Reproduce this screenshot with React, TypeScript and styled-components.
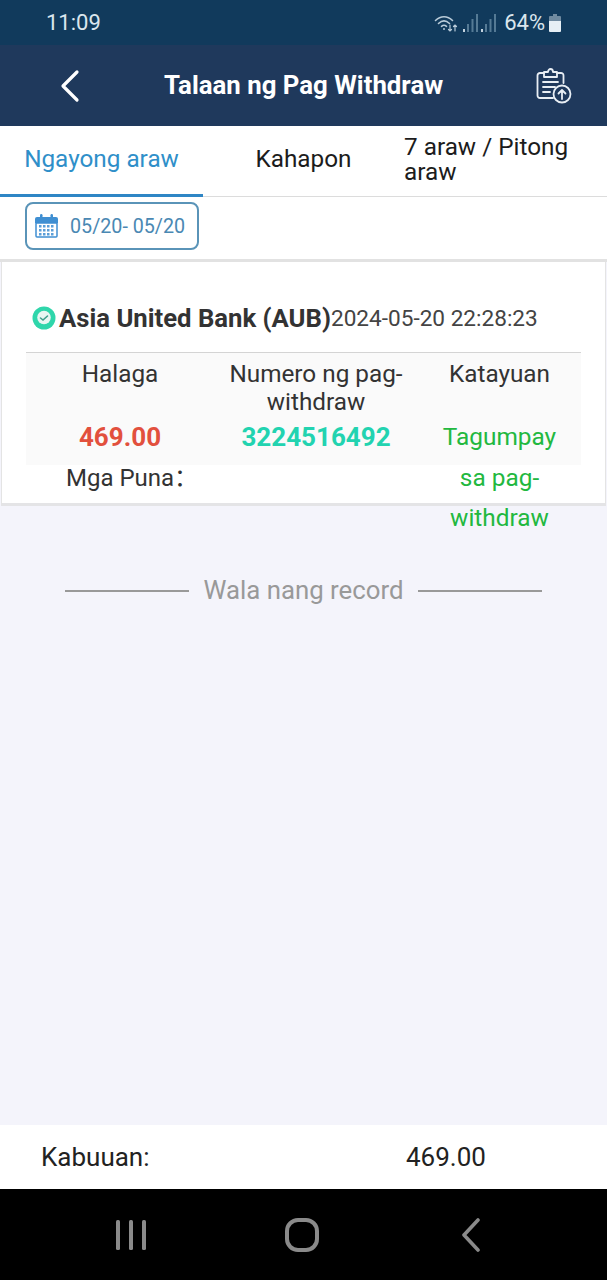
import styled, { createGlobalStyle } from 'styled-components';

const GlobalStyle = createGlobalStyle`
  html, body {
    margin: 0;
    padding: 0;
  }
  * {
    box-sizing: border-box;
  }
  body {
    font-family: Roboto, "Liberation Sans", sans-serif;
    background: #000;
  }
`;

const App = () => {
  return (
    <Page>
      <GlobalStyle />
      <StatusBar>
        <Clock>11:09</Clock>
        <StatusIcons>
          <svg width="26" height="20" viewBox="0 0 26 20" fill="none" stroke="#b9cbd9" strokeLinecap="round">
            <path d="M1.5 7.5C6.5 2.5 13.5 2.5 18.5 7.5" strokeWidth="1.6" />
            <path d="M4.5 10.5C8 7.2 12 7.2 15.5 10.5" strokeWidth="1.6" />
            <path d="M7.5 13.3C9 12 11 12 12.5 13.3" strokeWidth="1.6" />
            <circle cx="10" cy="16" r="1" fill="#b9cbd9" stroke="none" />
            <path d="M16 12v6M14.5 16.5l1.5 1.5 1.5-1.5M21 18v-6M19.5 13.5l1.5-1.5 1.5 1.5" strokeWidth="1.2" />
          </svg>
          <SignalBars />
          <SignalBars />
          <BatteryText>64%</BatteryText>
          <svg width="12" height="18" viewBox="0 0 12 18">
            <path d="M4 0h4v2h3a1 1 0 0 1 1 1v4H0V3a1 1 0 0 1 1-1h3z" fill="#6f8aa0" />
            <path d="M0 7h12v10a1 1 0 0 1-1 1H1a1 1 0 0 1-1-1z" fill="#e6eff5" />
          </svg>
        </StatusIcons>
      </StatusBar>

      <Header>
        <BackIcon width="22" height="34" viewBox="0 0 22 34" fill="none" stroke="#fff" strokeWidth="3.2" strokeLinecap="round" strokeLinejoin="round">
          <path d="M18 3L4 17l14 14" />
        </BackIcon>
        <Title>Talaan ng Pag Withdraw</Title>
        <ClipboardIcon width="38" height="38" viewBox="0 0 38 38" fill="none" stroke="#e8eef4" strokeWidth="1.8" strokeLinecap="round" strokeLinejoin="round">
          <path d="M9 6H5a2.5 2.5 0 0 0-2.500 2.500v20A2.500 2.500 0 0 0 5 31h13" />
          <path d="M22 6h4a2.500 2.500 0 0 1 2.500 2.500V16" />
          <path d="M9 5h4c0-4 5-4 5 0h4v5H9z" />
          <path d="M8 15h15M8 20h12M8 25h7" />
          <circle cx="27" cy="27" r="8.500" fill="#1f395c" />
          <path d="M27 32v-9M23.500 26.500L27 23l3.500 3.500" />
        </ClipboardIcon>
      </Header>

      <Tabs>
        <Tab $active>Ngayong araw</Tab>
        <Tab>Kahapon</Tab>
        <Tab>7 araw / Pitong araw</Tab>
      </Tabs>

      <DateRow>
        <DateButton>
          <svg width="23" height="24" viewBox="0 0 23 24">
            <path d="M0 5a2 2 0 0 1 2-2h19a2 2 0 0 1 2 2v4H0z" fill="#3f8fd2" />
            <rect x="5" y="0" width="2.500" height="6" rx="1.200" fill="#3f8fd2" />
            <rect x="15.500" y="0" width="2.500" height="6" rx="1.200" fill="#3f8fd2" />
            <path d="M1 9h21v13a1 1 0 0 1-1 1H2a1 1 0 0 1-1-1z" fill="#fff" stroke="#3f8fd2" strokeWidth="1.500" />
            <path
              d="M4 11h2.500v2.500H4zM8 11h2.500v2.500H8zM12 11h2.500v2.500H12zM16 11h2.500v2.500H16zM4 15h2.500v2.500H4zM8 15h2.500v2.500H8zM12 15h2.500v2.500H12zM16 15h2.500v2.500H16zM4 19h2.500v2.500H4zM8 19h2.500v2.500H8zM12 19h2.500v2.500H12zM16 19h2.500v2.500H16z"
              fill="#5a9ed8"
            />
          </svg>
          <DateText>05/20- 05/20</DateText>
        </DateButton>
      </DateRow>

      <Content>
        <Card>
          <CardHead>
            <svg width="24" height="24" viewBox="0 0 24 24">
              <circle cx="12" cy="12" r="11.500" fill="#2fd6ab" />
              <circle cx="12" cy="11.500" r="6.800" fill="#e9f6f2" />
              <path d="M8.500 12l2.500 2 4.500-4" fill="none" stroke="#3f9f8c" strokeWidth="1.600" strokeLinecap="round" />
            </svg>
            <BankName>Asia United Bank (AUB)</BankName>
            <Timestamp>2024-05-20 22:28:23</Timestamp>
          </CardHead>
          <Table>
            <TableRow $header>
              <HeadCell>Halaga</HeadCell>
              <HeadCell>Numero ng pag-withdraw</HeadCell>
              <HeadCell>Katayuan</HeadCell>
            </TableRow>
            <TableRow>
              <ValueCell $color="#e2503d">469.00</ValueCell>
              <ValueCell $color="#22d3b0">3224516492</ValueCell>
              <StatusCell>Tagumpay sa pag-withdraw</StatusCell>
            </TableRow>
          </Table>
          <Remarks>Mga Puna：</Remarks>
        </Card>
        <NoMore>
          <NoMoreLine />
          <span>Wala nang record</span>
          <NoMoreLine />
        </NoMore>
      </Content>

      <Footer>
        <FooterLabel>Kabuuan:</FooterLabel>
        <span>469.00</span>
      </Footer>

      <NavBar>
        <svg width="32" height="32" viewBox="0 0 32 32" fill="#8a8a8a">
          <rect x="1" y="1" width="4" height="30" rx="1.500" />
          <rect x="14" y="1" width="4" height="30" rx="1.500" />
          <rect x="27" y="1" width="4" height="30" rx="1.500" />
        </svg>
        <svg width="34" height="34" viewBox="0 0 34 34" fill="none" stroke="#8a8a8a" strokeWidth="4">
          <rect x="2" y="2" width="30" height="30" rx="11" />
        </svg>
        <svg width="20" height="34" viewBox="0 0 20 34" fill="none" stroke="#8a8a8a" strokeWidth="3.600" strokeLinecap="round" strokeLinejoin="round">
          <path d="M17 2L3 17l14 15" />
        </svg>
      </NavBar>
    </Page>
  );
};

const SignalBars = () => (
  <svg width="15" height="18" viewBox="0 0 15 18" fill="#557a95">
    <rect x="0" y="15" width="2" height="3" fill="#c3d2de" />
    <rect x="4" y="10" width="2" height="8" />
    <rect x="8.500" y="5" width="2" height="13" />
    <rect x="13" y="0" width="2" height="18" />
  </svg>
);

const Page = styled.div`
  display: flex;
  flex-direction: column;
  width: 607px;
  height: 1280px;
  overflow: hidden;
  background: #f4f4fb;
`;

const StatusBar = styled.div`
  display: flex;
  align-items: center;
  justify-content: space-between;
  height: 45px;
  padding: 0 46px 0 46px;
  background: #113a5c;
  color: #dbe6ee;
`;

const Clock = styled.span`
  font-size: 22px;
`;

const StatusIcons = styled.div`
  display: flex;
  align-items: center;
  gap: 3px;
`;

const BatteryText = styled.span`
  font-size: 22px;
  margin: 0 1px 0 5px;
`;

const Header = styled.header`
  display: flex;
  align-items: center;
  height: 81px;
  padding: 0 34px 0 59px;
  background: #1f395c;
`;

const BackIcon = styled.svg`
  flex-shrink: 0;
`;

const Title = styled.h1`
  flex: 1;
  margin: 0 0 2px 83px;
  color: #fff;
  font-size: 25.800px;
  font-weight: 700;
  white-space: nowrap;
`;

const ClipboardIcon = styled.svg`
  flex-shrink: 0;
`;

const Tabs = styled.nav`
  display: grid;
  grid-template-columns: 203px 201px 203px;
  height: 71px;
  background: #fff;
  border-bottom: 1px solid #dcdcdc;
`;

const Tab = styled.div<{ $active?: boolean }>`
  display: flex;
  align-items: center;
  justify-content: center;
  height: 71px;
  padding-bottom: ${({ $active }) => ($active ? '3px' : '6px')};
  color: ${({ $active }) => ($active ? '#2f8fc9' : '#1c1c1c')};
  font-size: 24.300px;
  line-height: 25px;
  border-bottom: ${({ $active }) => ($active ? '3px solid #2f86c5' : 'none')};
`;

const DateRow = styled.div`
  height: 62px;
  padding: 5px 0 0 25px;
  background: #fff;
`;

const DateButton = styled.div`
  display: flex;
  align-items: center;
  gap: 12px;
  width: 174px;
  height: 48px;
  padding-left: 8px;
  border: 2px solid #5a94b8;
  border-radius: 8px;
`;

const DateText = styled.span`
  color: #4a88b3;
  font-size: 19.700px;
  white-space: nowrap;
`;

const Content = styled.main`
  flex: 1;
  border-top: 3px solid #e2e2e2;
`;

const Card = styled.section`
  height: 244px;
  margin: 0 1px;
  padding: 0 24px;
  background: #fff;
  border-left: 1px solid #e4e4e4;
  border-right: 1px solid #e4e4e4;
  border-bottom: 3px solid #e4e4e6;
`;

const CardHead = styled.div`
  display: flex;
  align-items: center;
  height: 91px;
  padding: 22px 0 0 6px;
  border-bottom: 1px solid #d4d4d4;
  white-space: nowrap;
`;

const BankName = styled.span`
  margin-left: 3px;
  color: #333;
  font-size: 25.700px;
  font-weight: 700;
`;

const Timestamp = styled.span`
  color: #444;
  font-size: 22.600px;
`;

const Table = styled.div`
  padding-bottom: 8px;
  background: #fafafa;
`;

const TableRow = styled.div<{ $header?: boolean }>`
  display: grid;
  grid-template-columns: 188px 204px 163px;
  height: ${({ $header }) => ($header ? '64px' : '40px')};
  padding-top: ${({ $header }) => ($header ? '7px' : '0')};
`;

const HeadCell = styled.div`
  padding: 0 8px;
  color: #333;
  font-size: 24.300px;
  line-height: 28px;
  text-align: center;
`;

const ValueCell = styled.div<{ $color: string }>`
  color: ${({ $color }) => $color};
  font-size: 26px;
  font-weight: 700;
  line-height: 40px;
  text-align: center;
`;

const StatusCell = styled.div`
  position: relative;
  padding: 0 20px;
  color: #22b83f;
  font-size: 24.400px;
  line-height: 40.500px;
  text-align: center;
`;

const Remarks = styled.div`
  margin-top: -7px;
  padding-left: 40px;
  color: #333;
  font-family: Roboto, "Noto Sans CJK SC", sans-serif;
  font-size: 24px;
  line-height: 40px;
`;

const NoMore = styled.div`
  display: flex;
  align-items: center;
  justify-content: center;
  gap: 14px;
  margin-top: 67px;
  color: #999;
  font-size: 25.800px;
  line-height: 34px;
`;

const NoMoreLine = styled.div`
  width: 124px;
  height: 2px;
  margin-top: 2px;
  background: #999;
`;

const Footer = styled.footer`
  display: flex;
  align-items: center;
  height: 64px;
  padding-left: 41px;
  background: #fff;
  color: #222;
  font-size: 26px;
`;

const FooterLabel = styled.span`
  width: 365px;
`;

const NavBar = styled.div`
  display: grid;
  grid-template-columns: 170px 176px 20px;
  align-items: center;
  height: 91px;
  padding-left: 115px;
  background: #000;
`;

export default App;
